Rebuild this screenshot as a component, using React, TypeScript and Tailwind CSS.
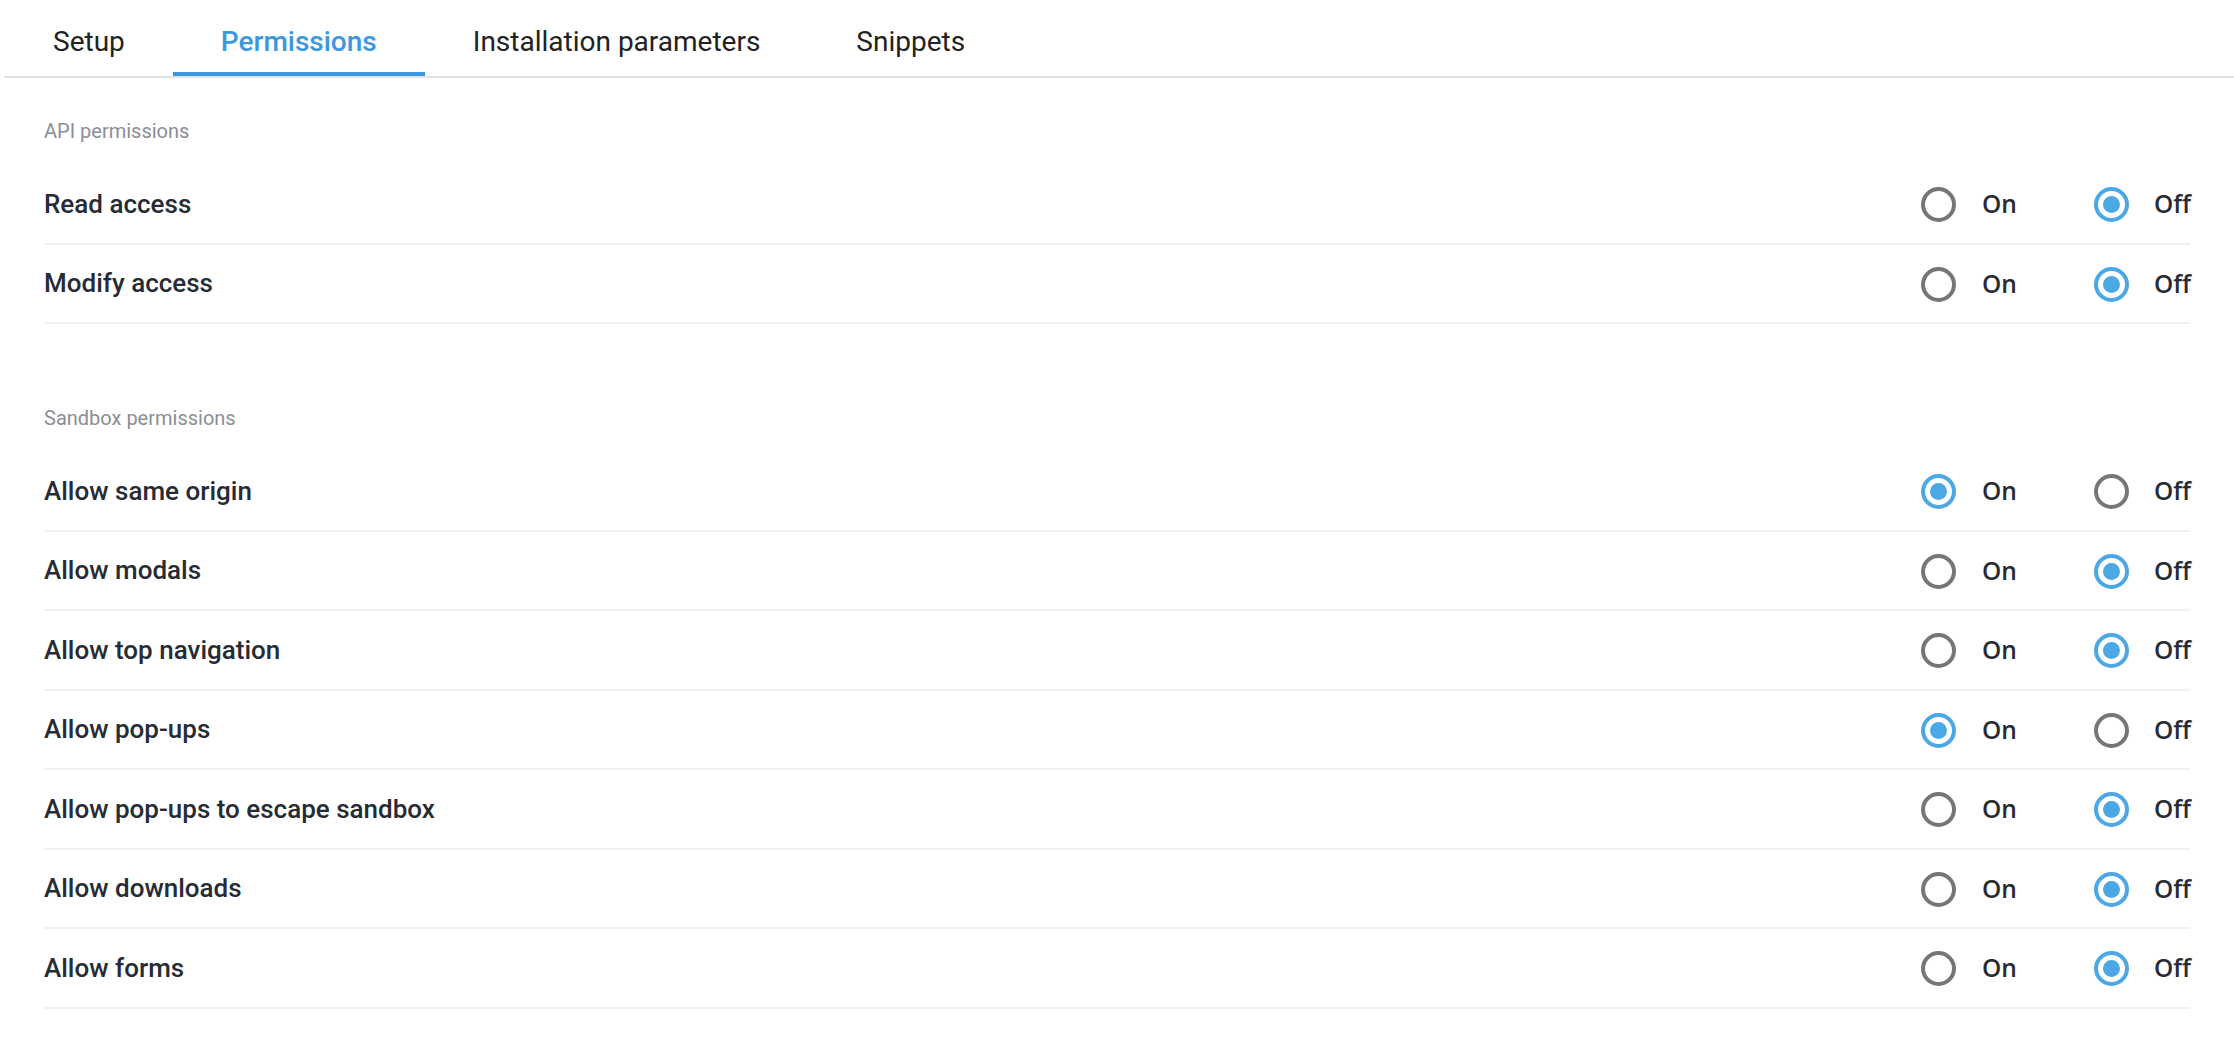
import { useState } from 'react';

type Perm = { id: string; label: string; on: boolean };

const tabs = ['Setup', 'Permissions', 'Installation parameters', 'Snippets'];

const apiPerms: Perm[] = [
  { id: 'read', label: 'Read access', on: false },
  { id: 'modify', label: 'Modify access', on: false },
];

const sandboxPerms: Perm[] = [
  { id: 'same-origin', label: 'Allow same origin', on: true },
  { id: 'modals', label: 'Allow modals', on: false },
  { id: 'top-nav', label: 'Allow top navigation', on: false },
  { id: 'popups', label: 'Allow pop-ups', on: true },
  { id: 'popups-escape', label: 'Allow pop-ups to escape sandbox', on: false },
  { id: 'downloads', label: 'Allow downloads', on: false },
  { id: 'forms', label: 'Allow forms', on: false },
];

function Radio({ checked }: { checked: boolean }) {
  return (
    <span
      className={
        checked
          ? 'flex w-[35px] h-[35px] shrink-0 items-center justify-center rounded-full border-[4px] border-[#4ca8e5]'
          : 'flex w-[35px] h-[35px] shrink-0 items-center justify-center rounded-full border-[4px] border-[#767676]'
      }
    >
      {checked && <span className="w-[17px] h-[17px] rounded-full bg-[#4ca8e5]" />}
    </span>
  );
}

function PermRow({ perm, onChange }: { perm: Perm; onChange: (v: boolean) => void }) {
  return (
    <div className="flex h-[79.5px] items-center border-b-2 border-[#f1f1f1]">
      <div className="flex-1 pt-[1px] text-[26px] font-medium text-[#262b35]">{perm.label}</div>
      {/* On / Off radios */}
      <div className="flex w-[269px] items-center pt-[2px] text-[24.5px] font-semibold text-[#262b35] [font-family:'Open_Sans',sans-serif]">
        <button className="flex items-center" onClick={() => onChange(true)}>
          <Radio checked={perm.on} />
          <span className="ml-[26px] w-[112px] text-left">On</span>
        </button>
        <button className="flex items-center" onClick={() => onChange(false)}>
          <Radio checked={!perm.on} />
          <span className="ml-[25px] text-left">Off</span>
        </button>
      </div>
    </div>
  );
}

function Section({
  title,
  perms,
  setPerms,
  className,
}: {
  title: string;
  perms: Perm[];
  setPerms: (p: Perm[]) => void;
  className?: string;
}) {
  return (
    <section className={className}>
      <div className="h-[24px] leading-[24px] text-[20px] text-[#8a8e96] mb-[22px]">{title}</div>
      {perms.map((p) => (
        <PermRow
          key={p.id}
          perm={p}
          onChange={(v) => setPerms(perms.map((x) => (x.id === p.id ? { ...x, on: v } : x)))}
        />
      ))}
    </section>
  );
}

export default function App() {
  const [active, setActive] = useState('Permissions');
  const [api, setApi] = useState(apiPerms);
  const [sandbox, setSandbox] = useState(sandboxPerms);

  return (
    <div className="min-h-screen w-full bg-white [font-family:Roboto,'Liberation_Sans',sans-serif]">
      {/* Tabs */}
      <div className="ml-[4px] flex border-b-2 border-[#e1e1e1]">
        <div className="ml-[1px] flex">
          {tabs.map((t) => (
            <button
              key={t}
              onClick={() => setActive(t)}
              className={
                t === active
                  ? 'flex h-[76px] items-center px-[48px] pt-[11px] border-b-4 border-[#3b98e0] text-[28px] font-medium text-[#3b98e0]'
                  : 'flex h-[76px] items-center px-[48px] pt-[11px] border-b-4 border-transparent text-[28px] text-[#222222]'
              }
            >
              {t}
            </button>
          ))}
        </div>
      </div>

      <div className="px-[44px] pt-[41px]">
        <Section title="API permissions" perms={api} setPerms={setApi} />
        <Section title="Sandbox permissions" perms={sandbox} setPerms={setSandbox} className="mt-[82px]" />
      </div>
    </div>
  );
}
